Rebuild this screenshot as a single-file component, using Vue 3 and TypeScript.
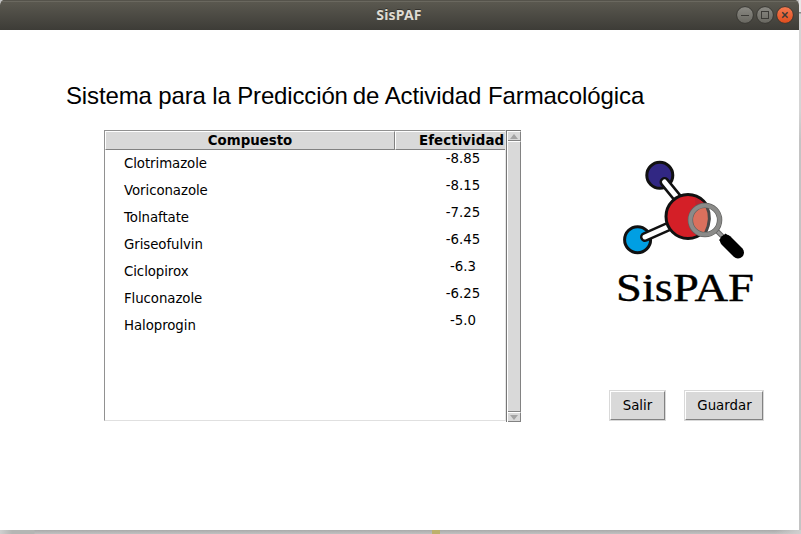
<script setup lang="ts">
interface Compound {
  name: string
  score: string
}

const compounds: Compound[] = [
  { name: 'Clotrimazole', score: '-8.85' },
  { name: 'Voriconazole', score: '-8.15' },
  { name: 'Tolnaftate', score: '-7.25' },
  { name: 'Griseofulvin', score: '-6.45' },
  { name: 'Ciclopirox', score: '-6.3' },
  { name: 'Fluconazole', score: '-6.25' },
  { name: 'Haloprogin', score: '-5.0' },
]
</script>

<template>
  <div class="desktop">
    <div class="window">
      <header class="titlebar">
        <span class="caption">SisPAF</span>
        <div class="controls">
          <svg width="60" height="22" viewBox="0 0 60 22">
            <defs>
              <linearGradient id="grey" x1="0" y1="0" x2="0" y2="1">
                <stop offset="0" stop-color="#8b8a84" />
                <stop offset="1" stop-color="#686760" />
              </linearGradient>
              <linearGradient id="orange" x1="0" y1="0" x2="0" y2="1">
                <stop offset="0" stop-color="#f47b52" />
                <stop offset="1" stop-color="#df4c1c" />
              </linearGradient>
            </defs>
            <g stroke="#383732" stroke-width="1">
              <circle cx="10" cy="11" r="8.4" fill="url(#grey)" />
              <circle cx="30" cy="11" r="8.4" fill="url(#grey)" />
              <circle cx="50" cy="11" r="8.4" fill="url(#orange)" />
            </g>
            <g fill="none" stroke="#3c3b37">
              <path d="M6 11.5h8" />
              <rect x="26.5" y="7.5" width="7" height="7" />
              <path d="M47.3 8.3l5.4 5.4M52.7 8.3l-5.4 5.4" stroke-width="1.5" />
            </g>
          </svg>
        </div>
      </header>

      <main class="body">
        <h1 class="heading"><span class="lead">Sistema para la Predicción</span><span class="rest">de Actividad Farmacológica</span></h1>
        <div class="columns">
          <div class="tree">
            <div class="list">
              <div class="head">
                <div class="cell name-head">Compuesto</div>
                <div class="cell score-head">Efectividad</div>
              </div>
              <div class="rows">
                <div v-for="c in compounds" :key="c.name" class="row">
                  <span class="name">{{ c.name }}</span>
                  <span class="score">{{ c.score }}</span>
                </div>
              </div>
            </div>
            <div class="scrollbar">
              <div class="arrow"><svg width="8" height="5" viewBox="0 0 8 5"><path d="M4 0L8 5H0z" fill="#a3a3a3" /></svg></div>
              <div class="thumb"></div>
              <div class="arrow"><svg width="8" height="5" viewBox="0 0 8 5"><path d="M0 0H8L4 5z" fill="#a3a3a3" /></svg></div>
            </div>
          </div>

          <aside class="side">
            <svg class="logo" width="170" height="160" viewBox="0 0 170 160">
              <g stroke="#111" stroke-width="3">
                <circle cx="59.8" cy="25.3" r="13" fill="#312783" />
                <circle cx="37.6" cy="89.7" r="13" fill="#009fe3" />
              </g>
              <g stroke-linecap="round">
                <path d="M64.5 32L80 51M45 87L72 75" stroke="#111" stroke-width="10" />
                <path d="M64.5 32L80 51M45 87L72 75" stroke="#fff" stroke-width="5" />
              </g>
              <circle cx="88" cy="66.5" r="22" fill="#d41f27" stroke="#111" stroke-width="3" />
              <path d="M95 48A19 19 0 0 1 98 84Z" fill="#bf222d" />
              <circle cx="105" cy="70" r="14" fill="#fff" />
              <path d="M105 56A14 14 0 0 0 105 84Q113 70 107 56Z" fill="#da705d" />
              <path d="M107 57Q112.5 68 105.5 83" fill="none" stroke="#494949" stroke-width="3" />
              <path d="M116 80L123 87" stroke="#666" stroke-width="5" />
              <path d="M116 80L123 87" stroke="#999" stroke-width="3" />
              <circle cx="105" cy="70" r="14.6" fill="none" stroke="#626260" stroke-width="5.4" />
              <circle cx="105" cy="70" r="14.6" fill="none" stroke="#8b8b89" stroke-width="4" />
              <path d="M126 90.5L138 102.5" stroke="#000" stroke-width="12" stroke-linecap="round" />
              <path d="M119 90L125.5 83.5L133 90L125 97Z" fill="#000" />
              <text x="16" y="151" textLength="138" lengthAdjust="spacingAndGlyphs" class="wordmark">SisPAF</text>
            </svg>
            <div class="actions">
              <button class="btn exit" type="button">Salir</button>
              <button class="btn save" type="button">Guardar</button>
            </div>
          </aside>
        </div>
      </main>
    </div>
    <div class="edge"></div>
    <div class="floor"><span class="patch"></span></div>
  </div>
</template>

<style>
body {
  margin: 0;
  overflow: hidden;
}
</style>

<style scoped>
.desktop {
  width: 801px;
  height: 534px;
  display: grid;
  grid-template: 530px 4px / 799px 2px;
  background: #c4c4c4;
  font: 13.33px/16px 'DejaVu Sans', sans-serif;
  color: #000;
}
.window {
  display: flex;
  flex-direction: column;
  background: #fff;
  border-radius: 5px 5px 0 0;
  overflow: hidden;
}
.titlebar {
  height: 30px;
  box-sizing: border-box;
  display: grid;
  grid-template-columns: 1fr auto 1fr;
  align-items: center;
  padding-right: 4px;
  background: linear-gradient(#5c5a51, #3d3c37);
  box-shadow: inset 0 1px #55534b, inset 0 2px #6a685f;
}
.caption {
  grid-column: 2;
  margin: 0 0 1px 3px;
  font: bold 14px/18px 'Noto Sans', sans-serif;
  letter-spacing: 0.2px;
  color: #dfdbd2;
  text-shadow: 0 -1px #33322e;
}
.controls {
  justify-self: end;
  height: 22px;
}
.controls svg,
.logo {
  display: block;
}
.body {
  flex: 1;
  padding-top: 52px;
}
.heading {
  margin: 0 0 20px 66px;
  display: flex;
  gap: 5px;
  font: 24px/28px 'Liberation Sans', sans-serif;
  white-space: nowrap;
}
.lead {
  letter-spacing: -0.14px;
}
.rest {
  letter-spacing: -0.08px;
}
.columns {
  display: flex;
}
.tree {
  display: flex;
  width: 417px;
  height: 292px;
  margin-left: 104px;
}
.list {
  width: 402px;
  height: 291px;
  box-sizing: border-box;
  border: 1px solid #919191;
  border-right-color: #e6e6e6;
  border-bottom-color: #e0e0e0;
}
.head {
  display: flex;
  height: 19px;
  font-weight: bold;
}
.cell {
  box-sizing: border-box;
  height: 19px;
  overflow: hidden;
  background: #d9d9d9;
  border: 1px solid #fff;
  border-right-color: #828282;
  border-bottom-color: #828282;
  line-height: 17px;
  white-space: nowrap;
}
.name-head {
  width: 290px;
  text-align: center;
}
.score-head {
  flex: 1;
  padding-left: 23px;
  border-right: 0;
  letter-spacing: 0.09px;
}
.rows {
  display: flex;
  flex-direction: column;
}
.row {
  display: flex;
  height: 27px;
}
.name {
  width: 290px;
  box-sizing: border-box;
  padding: 6px 0 0 19px;
  letter-spacing: -0.07px;
}
.score {
  width: 136px;
  padding-top: 1px;
  text-align: center;
  margin-right: -26px;
}
.scrollbar {
  width: 15px;
  box-sizing: border-box;
  display: flex;
  flex-direction: column;
  border-left: 1px solid #777;
  border-top: 1px solid #777;
  padding-left: 1px;
}
.arrow,
.thumb {
  box-sizing: border-box;
  background: #d9d9d9;
  border: 1px solid #fff;
  border-left: 0;
  border-right-color: #828282;
  border-bottom-color: #828282;
}
.arrow {
  height: 10px;
  display: flex;
  align-items: center;
  justify-content: center;
}
.thumb {
  flex: 1;
}
.side {
  margin: 20px 0 0 79px;
}
.actions {
  display: flex;
  gap: 18px;
  margin: 80px 0 0 9px;
}
.btn {
  height: 29px;
  margin: 1px;
  padding: 0;
  border: 1px solid;
  border-color: #fff #828282 #828282 #fff;
  outline: 1px solid #d9d9d9;
  background: #d9d9d9;
  font: inherit;
  color: #000;
}
.exit {
  width: 55px;
}
.save {
  width: 78px;
  padding-left: 1px;
}
.wordmark {
  font: 41px 'Liberation Serif', serif;
  stroke: #000;
  stroke-width: 0.4px;
}
.edge {
  background: linear-gradient(#e8e8e8 0 12px, #888 12px 13px, #d5d5d5 14px 110px, #c4c4c4 140px);
}
.floor {
  grid-column: 1 / 3;
  display: flex;
  background: linear-gradient(90deg, #d0d0d0, #b4b6b4 12px 34px, transparent 35px 775px, #d0d0d0), linear-gradient(#aaa, #c1c1c1);
}
.patch {
  width: 8px;
  margin-left: 432px;
  background: #bdb16c;
}
</style>
